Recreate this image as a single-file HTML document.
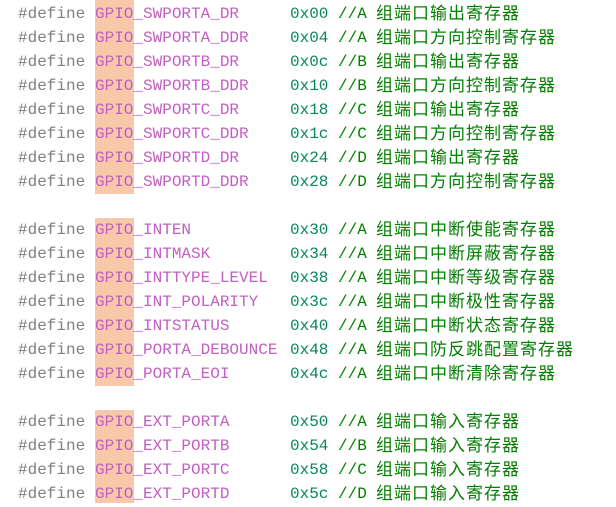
<html><head><style>
body{margin:0;background:#fff;width:616px;height:507px;overflow:hidden;position:relative}
.hl{position:absolute;left:95px;width:39px;background:#f8c9a9}
.l{position:absolute;left:0;width:616px;height:24px;line-height:24px;font-family:"Liberation Mono",monospace;font-size:16px;white-space:pre}
.l span{position:absolute;top:0}
.d{left:18px;color:#808080}.p{left:95px;color:#c060c0}.x{left:290px;color:#098658}.c{left:338px;color:#008000}
.z{left:376px;color:#008000;font-family:"Liberation Sans","Noto Sans CJK SC",sans-serif;font-size:17px;letter-spacing:1px}
</style></head><body>
<div class="hl" style="top:0;height:194px"></div>
<div class="hl" style="top:218px;height:168px"></div>
<div class="hl" style="top:410px;height:93px"></div>
<div class="l" style="top:2px"><span class="d">#define</span><span class="p">GPIO_SWPORTA_DR</span><span class="x">0x00</span><span class="c">//A</span><span class="z">组端口输出寄存器</span></div>
<div class="l" style="top:26px"><span class="d">#define</span><span class="p">GPIO_SWPORTA_DDR</span><span class="x">0x04</span><span class="c">//A</span><span class="z">组端口方向控制寄存器</span></div>
<div class="l" style="top:50px"><span class="d">#define</span><span class="p">GPIO_SWPORTB_DR</span><span class="x">0x0c</span><span class="c">//B</span><span class="z">组端口输出寄存器</span></div>
<div class="l" style="top:74px"><span class="d">#define</span><span class="p">GPIO_SWPORTB_DDR</span><span class="x">0x10</span><span class="c">//B</span><span class="z">组端口方向控制寄存器</span></div>
<div class="l" style="top:98px"><span class="d">#define</span><span class="p">GPIO_SWPORTC_DR</span><span class="x">0x18</span><span class="c">//C</span><span class="z">组端口输出寄存器</span></div>
<div class="l" style="top:122px"><span class="d">#define</span><span class="p">GPIO_SWPORTC_DDR</span><span class="x">0x1c</span><span class="c">//C</span><span class="z">组端口方向控制寄存器</span></div>
<div class="l" style="top:146px"><span class="d">#define</span><span class="p">GPIO_SWPORTD_DR</span><span class="x">0x24</span><span class="c">//D</span><span class="z">组端口输出寄存器</span></div>
<div class="l" style="top:170px"><span class="d">#define</span><span class="p">GPIO_SWPORTD_DDR</span><span class="x">0x28</span><span class="c">//D</span><span class="z">组端口方向控制寄存器</span></div>
<div class="l" style="top:218px"><span class="d">#define</span><span class="p">GPIO_INTEN</span><span class="x">0x30</span><span class="c">//A</span><span class="z">组端口中断使能寄存器</span></div>
<div class="l" style="top:242px"><span class="d">#define</span><span class="p">GPIO_INTMASK</span><span class="x">0x34</span><span class="c">//A</span><span class="z">组端口中断屏蔽寄存器</span></div>
<div class="l" style="top:266px"><span class="d">#define</span><span class="p">GPIO_INTTYPE_LEVEL</span><span class="x">0x38</span><span class="c">//A</span><span class="z">组端口中断等级寄存器</span></div>
<div class="l" style="top:290px"><span class="d">#define</span><span class="p">GPIO_INT_POLARITY</span><span class="x">0x3c</span><span class="c">//A</span><span class="z">组端口中断极性寄存器</span></div>
<div class="l" style="top:314px"><span class="d">#define</span><span class="p">GPIO_INTSTATUS</span><span class="x">0x40</span><span class="c">//A</span><span class="z">组端口中断状态寄存器</span></div>
<div class="l" style="top:338px"><span class="d">#define</span><span class="p">GPIO_PORTA_DEBOUNCE</span><span class="x">0x48</span><span class="c">//A</span><span class="z">组端口防反跳配置寄存器</span></div>
<div class="l" style="top:362px"><span class="d">#define</span><span class="p">GPIO_PORTA_EOI</span><span class="x">0x4c</span><span class="c">//A</span><span class="z">组端口中断清除寄存器</span></div>
<div class="l" style="top:410px"><span class="d">#define</span><span class="p">GPIO_EXT_PORTA</span><span class="x">0x50</span><span class="c">//A</span><span class="z">组端口输入寄存器</span></div>
<div class="l" style="top:434px"><span class="d">#define</span><span class="p">GPIO_EXT_PORTB</span><span class="x">0x54</span><span class="c">//B</span><span class="z">组端口输入寄存器</span></div>
<div class="l" style="top:458px"><span class="d">#define</span><span class="p">GPIO_EXT_PORTC</span><span class="x">0x58</span><span class="c">//C</span><span class="z">组端口输入寄存器</span></div>
<div class="l" style="top:482px"><span class="d">#define</span><span class="p">GPIO_EXT_PORTD</span><span class="x">0x5c</span><span class="c">//D</span><span class="z">组端口输入寄存器</span></div>
</body></html>
